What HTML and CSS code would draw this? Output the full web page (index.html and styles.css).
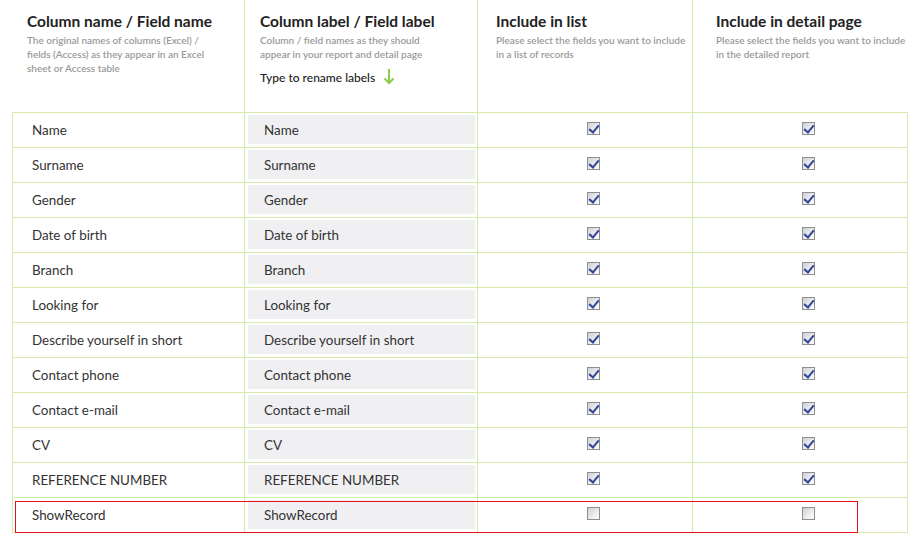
FILE: index.html
```html
<!DOCTYPE html>
<html>
<head>
<meta charset="utf-8">
<link rel="stylesheet" href="styles.css">
</head>
<body>
<div class="page">
  <div class="head">
    <div class="hcell h1">
      <div class="title">Column name / Field name</div>
      <div class="sub">The original names of columns (Excel) /<br>fields (Access) as they appear in an Excel<br>sheet or Access table</div>
    </div>
    <div class="hcell h2">
      <div class="title">Column label / Field label</div>
      <div class="sub">Column / field names as they should<br>appear in your report and detail page</div>
      <div class="rename">Type to rename labels
        <svg class="arrow" width="12" height="17" viewBox="0 0 12 17"><path d="M6 1v14M1.5 10.5L6 15l4.5-4.5" fill="none" stroke="#8ccb4a" stroke-width="2"/></svg>
      </div>
    </div>
    <div class="hcell h3">
      <div class="title">Include in list</div>
      <div class="sub">Please select the fields you want to include<br>in a list of records</div>
    </div>
    <div class="hcell h4">
      <div class="title">Include in detail page</div>
      <div class="sub">Please select the fields you want to include<br>in the detailed report</div>
    </div>
  </div>
  <div class="body">
    <div class="row"><div class="c1">Name</div><div class="c2"><div class="inp">Name</div></div><div class="c3"><span class="cb on"></span></div><div class="c4"><span class="cb on"></span></div></div>
    <div class="row"><div class="c1">Surname</div><div class="c2"><div class="inp">Surname</div></div><div class="c3"><span class="cb on"></span></div><div class="c4"><span class="cb on"></span></div></div>
    <div class="row"><div class="c1">Gender</div><div class="c2"><div class="inp">Gender</div></div><div class="c3"><span class="cb on"></span></div><div class="c4"><span class="cb on"></span></div></div>
    <div class="row"><div class="c1">Date of birth</div><div class="c2"><div class="inp">Date of birth</div></div><div class="c3"><span class="cb on"></span></div><div class="c4"><span class="cb on"></span></div></div>
    <div class="row"><div class="c1">Branch</div><div class="c2"><div class="inp">Branch</div></div><div class="c3"><span class="cb on"></span></div><div class="c4"><span class="cb on"></span></div></div>
    <div class="row"><div class="c1">Looking for</div><div class="c2"><div class="inp">Looking for</div></div><div class="c3"><span class="cb on"></span></div><div class="c4"><span class="cb on"></span></div></div>
    <div class="row"><div class="c1">Describe yourself in short</div><div class="c2"><div class="inp">Describe yourself in short</div></div><div class="c3"><span class="cb on"></span></div><div class="c4"><span class="cb on"></span></div></div>
    <div class="row"><div class="c1">Contact phone</div><div class="c2"><div class="inp">Contact phone</div></div><div class="c3"><span class="cb on"></span></div><div class="c4"><span class="cb on"></span></div></div>
    <div class="row"><div class="c1">Contact e-mail</div><div class="c2"><div class="inp">Contact e-mail</div></div><div class="c3"><span class="cb on"></span></div><div class="c4"><span class="cb on"></span></div></div>
    <div class="row"><div class="c1">CV</div><div class="c2"><div class="inp">CV</div></div><div class="c3"><span class="cb on"></span></div><div class="c4"><span class="cb on"></span></div></div>
    <div class="row"><div class="c1">REFERENCE NUMBER</div><div class="c2"><div class="inp">REFERENCE NUMBER</div></div><div class="c3"><span class="cb on"></span></div><div class="c4"><span class="cb on"></span></div></div>
    <div class="row last"><div class="c1">ShowRecord</div><div class="c2"><div class="inp">ShowRecord</div></div><div class="c3"><span class="cb"></span></div><div class="c4"><span class="cb"></span></div><div class="mark"></div></div>
  </div>
</div>
</body>
</html>
```

FILE: styles.css
```css
* { box-sizing: border-box; }
html, body { margin: 0; padding: 0; background: #fff; }
body { font-family: Lato, "Liberation Sans", sans-serif; color: #333; }
.page { padding-left: 12px; width: 908px; }
.head {
  display: grid;
  grid-template-columns: 232px 233px 215px 215px;
  height: 112px;
}
.hcell { padding-top: 11px; }
.h1 { padding-left: 15px; }
.h2 { border-left: 1px solid #d7eaae; padding-left: 15px; }
.h3 { border-left: 1px solid #d7eaae; padding-left: 18px; }
.h4 { border-left: 1px solid #d7eaae; padding-left: 23px; }
.title { font-size: 15.5px; font-weight: 700; color: #222; line-height: 20px; white-space: nowrap; }
.sub { font-size: 10px; color: #9a9a9a; line-height: 14px; margin-top: 2px; font-weight: 600; white-space: nowrap; }
.rename { font-size: 12px; color: #222; margin-top: 9px; display: flex; align-items: center; gap: 8px; font-weight: 500; }
.arrow { margin-top: -3px; }
.body { border: 1px solid #d7eaae; border-bottom: 0; width: 896px; }
.row {
  display: grid;
  grid-template-columns: 231px 233px 215px 215px;
  height: 35px; border-bottom: 1px solid #d7eaae; position: relative;
}
.c1 { padding-left: 19px; display: flex; align-items: center; font-size: 13.4px; color: #333; }
.c2 { border-left: 1px solid #d7eaae; padding: 2px 2px 3px 3px; }
.inp { background: #f0f0f2; height: 29px; display: flex; align-items: center; padding-left: 16px; font-size: 13.4px; color: #333; }
.c3, .c4 { border-left: 1px solid #d7eaae; display: flex; align-items: center; justify-content: center; padding-left: 17px; }
.cb {
  width: 13px; height: 13px; border: 1px solid #8e8f8f;
  background: linear-gradient(135deg, #cfd0d4 0%, #eceef0 60%, #fbfbfb 100%);
  position: relative; margin-top: -3px;
}
.cb.on::after {
  content: ""; position: absolute; left: 3px; top: 0px; width: 4px; height: 8px;
  border: solid #33459a; border-width: 0 2px 2px 0; transform: rotate(40deg);
}
.mark { position: absolute; left: 2px; top: 3px; width: 843px; height: 32px; border: 1px solid #e0121c; pointer-events: none; }
```
